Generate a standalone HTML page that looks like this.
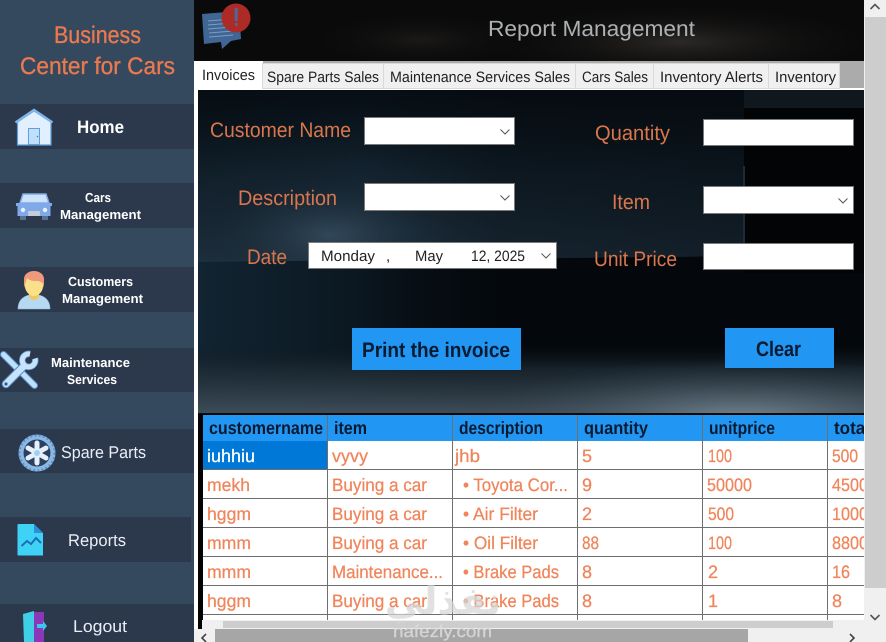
<!DOCTYPE html>
<html><head><meta charset="utf-8"><title>Report Management</title>
<style>
html,body{margin:0;padding:0;background:#fff;width:886px;height:642px;overflow:hidden}
svg{display:block}
text{font-family:"Liberation Sans",sans-serif;white-space:pre;text-rendering:geometricPrecision}
.lb{fill:#d9764e;font-size:21px}
.hd{fill:#0a1a30;font-size:18px;font-weight:bold}
.c{fill:#f0845a;font-size:18px;stroke:#f0845a;stroke-width:.25}
.tb{fill:#222;font-size:15px}
.nav{fill:#fff;font-size:13px;font-weight:bold}
.nr{fill:#e8eef5;font-size:17px}
</style></head><body>
<svg width="886" height="642" viewBox="0 0 886 642" xmlns="http://www.w3.org/2000/svg">
<defs>
<linearGradient id="wall" x1="0" y1="0" x2="0" y2="1"><stop offset="0" stop-color="#0c1924" stop-opacity=".35"/><stop offset=".5" stop-color="#172a38" stop-opacity=".85"/><stop offset="1" stop-color="#24394a"/></linearGradient>
<linearGradient id="wallH" x1="0" y1="0" x2="1" y2="0"><stop offset="0" stop-color="#05090d" stop-opacity=".2"/><stop offset=".3" stop-color="#05090d" stop-opacity="0"/><stop offset=".55" stop-color="#05090d" stop-opacity=".45"/><stop offset="1" stop-color="#05090d" stop-opacity=".55"/></linearGradient>
<linearGradient id="lowL" x1="0" y1="0" x2="1" y2="0"><stop offset="0" stop-color="#122431"/><stop offset=".45" stop-color="#0b1822"/><stop offset="1" stop-color="#04070b" stop-opacity="0"/></linearGradient>
<linearGradient id="floor" x1="0" y1="0" x2="0" y2="1"><stop offset="0" stop-color="#10181f" stop-opacity="0"/><stop offset=".35" stop-color="#1e2b35" stop-opacity=".75"/><stop offset="1" stop-color="#3e4e59"/></linearGradient>
<radialGradient id="fl2" cx=".5" cy=".5" r=".5"><stop offset="0" stop-color="#7a8b95" stop-opacity=".95"/><stop offset="1" stop-color="#33424c" stop-opacity="0"/></radialGradient>
<radialGradient id="haze" cx=".5" cy=".5" r=".5"><stop offset="0" stop-color="#344c5e" stop-opacity=".85"/><stop offset="1" stop-color="#0a1118" stop-opacity="0"/></radialGradient>
<radialGradient id="hz2" cx=".5" cy=".5" r=".5"><stop offset="0" stop-color="#2c2927"/><stop offset="1" stop-color="#0a0a0a" stop-opacity="0"/></radialGradient>
<clipPath id="tbl"><rect x="202" y="414" width="662" height="206"/></clipPath>
<clipPath id="wallc"><path d="M198 90H744V256L198 262Z"/></clipPath>
</defs>

<!-- sidebar -->
<rect x="0" y="0" width="194" height="642" fill="#34485e"/>
<rect y="104" width="194" height="45" fill="#2c394d"/>
<rect y="183" width="194" height="45" fill="#2c394d"/>
<rect y="267" width="194" height="45" fill="#2c394d"/>
<rect y="348" width="194" height="44" fill="#2c394d"/>
<rect y="429" width="194" height="44" fill="#2c394d"/>
<rect y="517" width="191" height="45" fill="#2c394d"/>
<rect y="604" width="194" height="38" fill="#2c394d"/>
<text x="54" y="43" textLength="87" lengthAdjust="spacingAndGlyphs" font-size="24" fill="#e9794f" stroke="#e9794f" stroke-width=".35">Business</text>
<text x="20" y="74" textLength="155" lengthAdjust="spacingAndGlyphs" font-size="24" fill="#e9794f" stroke="#e9794f" stroke-width=".35">Center for Cars</text>
<text x="77" y="133" textLength="47" lengthAdjust="spacingAndGlyphs" font-size="18" font-weight="bold" fill="#fff">Home</text>
<text class="nav" x="85" y="202" textLength="26" lengthAdjust="spacingAndGlyphs">Cars</text>
<text class="nav" x="60" y="219" textLength="81" lengthAdjust="spacingAndGlyphs">Management</text>
<text class="nav" x="68" y="286" textLength="65" lengthAdjust="spacingAndGlyphs">Customers</text>
<text class="nav" x="62" y="303" textLength="81" lengthAdjust="spacingAndGlyphs">Management</text>
<text class="nav" x="51" y="367" textLength="79" lengthAdjust="spacingAndGlyphs">Maintenance</text>
<text class="nav" x="67" y="384" textLength="50" lengthAdjust="spacingAndGlyphs">Services</text>
<text class="nr" x="61" y="458" textLength="85" lengthAdjust="spacingAndGlyphs">Spare Parts</text>
<text class="nr" x="68" y="546" textLength="58" lengthAdjust="spacingAndGlyphs">Reports</text>
<text class="nr" x="73" y="632" textLength="54" lengthAdjust="spacingAndGlyphs">Logout</text>

<!-- home icon -->
<path d="M17.500 122V145H51V122L34 111Z" fill="#e2efff" stroke="#5f9fdc" stroke-width="1.200"/>
<path d="M15.500 122.500L34 110 52.500 122.500" fill="none" stroke="#7fb4e8" stroke-width="2.500"/>
<rect x="28.500" y="128.500" width="11" height="16" fill="#bfdffa" stroke="#5f9fdc"/>
<circle cx="37.500" cy="136.500" r=".8" fill="#3f7fc0"/>
<!-- car icon -->
<path d="M20 203L23 194H46L49 203Z" fill="#cfe2fb" stroke="#7fa9e6" stroke-width="1.500"/>
<path d="M16 203H52V206H50.500V216H17.500V206H16Z" fill="#7fa9e8"/>
<rect x="20" y="216" width="6" height="4" fill="#59708f"/><rect x="42" y="216" width="6" height="4" fill="#59708f"/>
<circle cx="23" cy="210" r="2.200" fill="#e8f2ff"/><circle cx="45" cy="210" r="2.200" fill="#e8f2ff"/>
<rect x="28" y="211" width="12" height="5" rx="1" fill="#c5ccd8"/>
<!-- person icon -->
<path d="M18 309C18 299 25 296 29 295H39C43 296 50 299 50 309Z" fill="#b6d9f1" stroke="#8fb9d8" stroke-width=".6"/>
<path d="M29 291H39V297C36 301 32 301 29 297Z" fill="#eec860"/>
<path d="M25 281C25 276 29 272 34 272S43 276 43 281V286C43 292 38 296 34 296S25 292 25 286Z" fill="#fbe08a"/>
<path d="M24 288V279C24 274 29 271 34 271S44 274 44 279V288L42.500 283C41 282 39 281 36 281 32 281 29 280 27 278 26 281 25.500 284 24 288Z" fill="#ef9a7c"/>
<!-- tools icon -->
<g stroke-linecap="round" fill="none">
<path d="M3.500 354.500L34.500 385.500" stroke="#5a8fc4" stroke-width="7"/>
<path d="M3.500 354.500L34.500 385.500" stroke="#bfe0fb" stroke-width="5"/>
<path d="M6 384L24 366" stroke="#5a8fc4" stroke-width="8.500"/>
<path d="M35 358.500A6.500 6.500 0 1 1 30 354" stroke="#5a8fc4" stroke-width="6.500" stroke-linecap="butt"/>
<path d="M6 384L24 366" stroke="#c6e3fb" stroke-width="6.500"/>
<path d="M35 358.500A6.500 6.500 0 1 1 30 354" stroke="#c6e3fb" stroke-width="5" stroke-linecap="butt"/>
<circle cx="6" cy="384" r="1.600" fill="#2f5f92"/>
</g>
<!-- wheel icon -->
<circle cx="37" cy="453" r="18.500" fill="#8ab8e6"/>
<circle cx="37" cy="453" r="17.500" fill="none" stroke="#5f90c4" stroke-width="2" stroke-dasharray="2 2.200"/>
<circle cx="37" cy="453" r="13.500" fill="#2c4060"/>
<g stroke="#e6f0fb" stroke-width="5" stroke-linecap="round">
<path d="M37 453V443"/><path d="M37 453L46 448"/><path d="M37 453L46 458"/><path d="M37 453L37 463"/><path d="M37 453L28 458"/><path d="M37 453L28 448"/>
</g>
<circle cx="37" cy="453" r="3" fill="#9fd0f5"/>
<!-- report icon -->
<path d="M18.500 524H34L43 533V555.500H18.500A1 1 0 0 1 17.500 555V525A1 1 0 0 1 18.500 524Z" fill="#3fd2f7"/>
<path d="M34 524L43 533H34Z" fill="#2e8ed8"/>
<path d="M21.500 546L27 541 31 544 36 538 41 543" fill="none" stroke="#1a6fb5" stroke-width="2"/>
<!-- logout icon -->
<path d="M34 612H44V642H34Z" fill="#8c36b8"/>
<path d="M23 614L34 611V642H24Z" fill="#3fd0e8"/>
<path d="M37 624H43V621L47 626 43 631V628H37Z" fill="#3fc4ee"/>

<!-- header -->
<rect x="194" y="0" width="670" height="61" fill="#0a0a0a"/>
<ellipse cx="420" cy="40" rx="120" ry="30" fill="url(#hz2)" opacity=".5"/>
<ellipse cx="680" cy="42" rx="210" ry="40" fill="url(#hz2)"/>
<path d="M204 16L241 13 243 41 233 43 224 51 223 44 206 46Z" fill="#406695" transform="translate(-2,-2)"/>
<g stroke="#7f9cc0" stroke-width="1"><path d="M208 21L232 19M208 25L232 23M208 29L232 27M209 33L233 31M209 37L233 35"/></g>
<circle cx="236" cy="18" r="14.500" fill="#ad2b27"/>
<rect x="234.700" y="8" width="3" height="13" fill="#4a6a98"/><rect x="235" y="23" width="2.600" height="3" fill="#4a6a98"/>
<text x="488" y="36" textLength="207" lengthAdjust="spacingAndGlyphs" font-size="22" fill="#adb1b3">Report Management</text>

<!-- tab strip -->
<rect x="194" y="61" width="670" height="29" fill="#fff"/>
<rect x="263" y="61" width="601" height="27" fill="#ababab"/>
<g fill="#f0f0f0" stroke="#d9d9d9">
<rect x="262.500" y="63.500" width="121" height="25"/>
<rect x="383.500" y="63.500" width="192" height="25"/>
<rect x="575.500" y="63.500" width="78" height="25"/>
<rect x="653.500" y="63.500" width="115" height="25"/>
<rect x="768.500" y="63.500" width="71" height="25"/>
</g>
<text class="tb" x="202" y="80" textLength="53" lengthAdjust="spacingAndGlyphs">Invoices</text>
<text class="tb" x="267" y="82" textLength="112" lengthAdjust="spacingAndGlyphs">Spare Parts Sales</text>
<text class="tb" x="390" y="82" textLength="180" lengthAdjust="spacingAndGlyphs">Maintenance Services Sales</text>
<text class="tb" x="582" y="82" textLength="66" lengthAdjust="spacingAndGlyphs">Cars Sales</text>
<text class="tb" x="660" y="82" textLength="103" lengthAdjust="spacingAndGlyphs">Inventory Alerts</text>
<text class="tb" x="775" y="82" textLength="61" lengthAdjust="spacingAndGlyphs">Inventory</text>

<!-- white gutter -->
<rect x="194" y="90" width="5" height="539" fill="#fff"/>

<!-- content background -->
<rect x="198" y="90" width="666" height="539" fill="#04080c"/>
<rect x="198" y="258" width="340" height="160" fill="url(#lowL)"/>
<g clip-path="url(#wallc)">
<rect x="198" y="90" width="546" height="172" fill="url(#wall)"/>
<rect x="198" y="90" width="546" height="172" fill="url(#wallH)"/>
<ellipse cx="330" cy="235" rx="150" ry="70" fill="url(#haze)"/>
</g>
<rect x="744" y="90" width="120" height="18" fill="#10181e"/>
<rect x="744" y="108" width="120" height="165" fill="#020406"/>
<rect x="743" y="166" width="2" height="92" fill="#202c35"/>
<rect x="198" y="345" width="666" height="69" fill="url(#floor)"/>
<ellipse cx="740" cy="420" rx="270" ry="62" fill="url(#fl2)"/>
<rect x="198" y="413" width="666" height="1" fill="#0a0d10"/>

<!-- form labels -->
<text class="lb" x="210" y="137" textLength="141" lengthAdjust="spacingAndGlyphs">Customer Name</text>
<text class="lb" x="238" y="205" textLength="99" lengthAdjust="spacingAndGlyphs">Description</text>
<text class="lb" x="247" y="264" textLength="40" lengthAdjust="spacingAndGlyphs">Date</text>
<text class="lb" x="595" y="140" textLength="75" lengthAdjust="spacingAndGlyphs">Quantity</text>
<text class="lb" x="612" y="209" textLength="38" lengthAdjust="spacingAndGlyphs">Item</text>
<text class="lb" x="594" y="266" textLength="83" lengthAdjust="spacingAndGlyphs">Unit Price</text>

<!-- inputs -->
<g fill="#fff" stroke="#7a7a7a">
<rect x="364.500" y="117.500" width="150" height="27"/>
<rect x="364.500" y="183.500" width="150" height="27"/>
<rect x="308.500" y="242.500" width="248" height="26"/>
<rect x="703.500" y="119.500" width="150" height="26"/>
<rect x="703.500" y="186.500" width="150" height="27"/>
<rect x="703.500" y="243.500" width="150" height="26"/>
</g>
<g fill="none" stroke="#555" stroke-width="1">
<path d="M500.500 129.500L505 134 509.500 129.500"/>
<path d="M500.500 195.500L505 200 509.500 195.500"/>
<path d="M541.500 253.500L546 258 550.500 253.500"/>
<path d="M838.500 198.500L843 203 847.500 198.500"/>
</g>
<g font-size="15" fill="#222">
<text x="321" y="261" textLength="54" lengthAdjust="spacingAndGlyphs">Monday</text>
<text x="386" y="261">,</text>
<text x="415" y="261" textLength="28" lengthAdjust="spacingAndGlyphs">May</text>
<text x="471" y="261" textLength="54" lengthAdjust="spacingAndGlyphs">12, 2025</text>
</g>

<!-- buttons -->
<rect x="352" y="328" width="169" height="42" fill="#2196f3"/>
<text x="362" y="357" textLength="148" lengthAdjust="spacingAndGlyphs" font-size="21" font-weight="bold" fill="#0a1a30">Print the invoice</text>
<rect x="725" y="328" width="109" height="40" fill="#2196f3"/>
<text x="756" y="356" textLength="45" lengthAdjust="spacingAndGlyphs" font-size="21" font-weight="bold" fill="#0a1a30">Clear</text>

<!-- table -->
<rect x="198" y="414" width="666" height="215" fill="#030303"/>
<g clip-path="url(#tbl)">
<rect x="203" y="415" width="661" height="205" fill="#fff"/>
<rect x="203" y="415" width="661" height="26" fill="#2196f3"/>
<rect x="203" y="441" width="124" height="28" fill="#0078d7"/>
<g fill="#6e6e6e">
<rect x="327" y="415" width="1" height="205"/><rect x="452" y="415" width="1" height="205"/><rect x="577" y="415" width="1" height="205"/><rect x="702" y="415" width="1" height="205"/><rect x="827" y="415" width="1" height="205"/>
<rect x="203" y="469" width="661" height="1"/><rect x="203" y="498" width="661" height="1"/><rect x="203" y="527" width="661" height="1"/><rect x="203" y="556" width="661" height="1"/><rect x="203" y="585" width="661" height="1"/><rect x="203" y="614" width="661" height="1"/>
</g>
<text class="hd" x="209" y="434" textLength="114" lengthAdjust="spacingAndGlyphs">customername</text>
<text class="hd" x="334" y="434" textLength="33" lengthAdjust="spacingAndGlyphs">item</text>
<text class="hd" x="459" y="434" textLength="84" lengthAdjust="spacingAndGlyphs">description</text>
<text class="hd" x="584" y="434" textLength="64" lengthAdjust="spacingAndGlyphs">quantity</text>
<text class="hd" x="709" y="434" textLength="66" lengthAdjust="spacingAndGlyphs">unitprice</text>
<text class="hd" x="834" y="434" textLength="36" lengthAdjust="spacingAndGlyphs">total</text>

<text class="c" style="fill:#fff;stroke:#fff" x="207" y="462" textLength="48" lengthAdjust="spacingAndGlyphs">iuhhiu</text>
<text class="c" x="332" y="462" textLength="36" lengthAdjust="spacingAndGlyphs">vyvy</text>
<text class="c" x="455" y="462" textLength="25" lengthAdjust="spacingAndGlyphs">jhb</text>
<text class="c" x="582" y="462">5</text>
<text class="c" x="708" y="462" textLength="24" lengthAdjust="spacingAndGlyphs">100</text>
<text class="c" x="832" y="462" textLength="26" lengthAdjust="spacingAndGlyphs">500</text>

<text class="c" x="207" y="491" textLength="43" lengthAdjust="spacingAndGlyphs">mekh</text>
<text class="c" x="332" y="491" textLength="95" lengthAdjust="spacingAndGlyphs">Buying a car</text>
<text class="c" x="463" y="491" textLength="105" lengthAdjust="spacingAndGlyphs">• Toyota Cor...</text>
<text class="c" x="582" y="491">9</text>
<text class="c" x="707" y="491" textLength="45" lengthAdjust="spacingAndGlyphs">50000</text>
<text class="c" x="832" y="491" textLength="36" lengthAdjust="spacingAndGlyphs">4500</text>

<text class="c" x="207" y="520" textLength="44" lengthAdjust="spacingAndGlyphs">hggm</text>
<text class="c" x="332" y="520" textLength="95" lengthAdjust="spacingAndGlyphs">Buying a car</text>
<text class="c" x="463" y="520" textLength="75" lengthAdjust="spacingAndGlyphs">• Air Filter</text>
<text class="c" x="582" y="520">2</text>
<text class="c" x="708" y="520" textLength="26" lengthAdjust="spacingAndGlyphs">500</text>
<text class="c" x="832" y="520" textLength="36" lengthAdjust="spacingAndGlyphs">1000</text>

<text class="c" x="207" y="549" textLength="44" lengthAdjust="spacingAndGlyphs">mmm</text>
<text class="c" x="332" y="549" textLength="95" lengthAdjust="spacingAndGlyphs">Buying a car</text>
<text class="c" x="463" y="549" textLength="75" lengthAdjust="spacingAndGlyphs">• Oil Filter</text>
<text class="c" x="582" y="549" textLength="17" lengthAdjust="spacingAndGlyphs">88</text>
<text class="c" x="708" y="549" textLength="24" lengthAdjust="spacingAndGlyphs">100</text>
<text class="c" x="832" y="549" textLength="36" lengthAdjust="spacingAndGlyphs">8800</text>

<text class="c" x="207" y="578" textLength="44" lengthAdjust="spacingAndGlyphs">mmm</text>
<text class="c" x="332" y="578" textLength="111" lengthAdjust="spacingAndGlyphs">Maintenance...</text>
<text class="c" x="463" y="578" textLength="96" lengthAdjust="spacingAndGlyphs">• Brake Pads</text>
<text class="c" x="582" y="578">8</text>
<text class="c" x="708" y="578">2</text>
<text class="c" x="832" y="578" textLength="18" lengthAdjust="spacingAndGlyphs">16</text>

<text class="c" x="207" y="607" textLength="44" lengthAdjust="spacingAndGlyphs">hggm</text>
<text class="c" x="332" y="607" textLength="95" lengthAdjust="spacingAndGlyphs">Buying a car</text>
<text class="c" x="463" y="607" textLength="96" lengthAdjust="spacingAndGlyphs">• Brake Pads</text>
<text class="c" x="582" y="607">8</text>
<text class="c" x="708" y="607">1</text>
<text class="c" x="832" y="607">8</text>
</g>

<!-- inner h scrollbar -->
<rect x="202" y="620" width="662" height="9" fill="#f0f0f0"/>
<rect x="223" y="621" width="610" height="7" fill="#cdcdcd"/>

<!-- outer h scrollbar -->
<rect x="194" y="629" width="692" height="13" fill="#f0f0f0"/>
<rect x="215" y="629" width="533" height="13" fill="#a6a6a6"/>
<path d="M206 634L202 638 206 642" fill="none" stroke="#444" stroke-width="1.600"/>
<path d="M850 634L854 638 850 642" fill="none" stroke="#444" stroke-width="1.600"/>

<!-- v scrollbar -->
<rect x="864" y="0" width="22" height="642" fill="#f0f0f0"/>
<rect x="865" y="17" width="21" height="571" fill="#cdcdcd"/>
<path d="M870.500 9L875 4.500 879.500 9" fill="none" stroke="#555" stroke-width="1.600"/>
<path d="M870.500 615L875 619.500 879.500 615" fill="none" stroke="#555" stroke-width="1.600"/>

<!-- watermark -->
<text x="443" y="614" text-anchor="middle" font-size="38" font-weight="bold" fill="#d6d6d6" fill-opacity=".72" style="font-family:'DejaVu Sans',sans-serif" direction="rtl">نفذلي</text>
<text x="393" y="637" textLength="99" lengthAdjust="spacingAndGlyphs" font-size="17" fill="#dcdcdc" fill-opacity=".85" stroke="#dcdcdc" stroke-opacity=".6" stroke-width=".4">nafezly.com</text>
</svg>
</body></html>
